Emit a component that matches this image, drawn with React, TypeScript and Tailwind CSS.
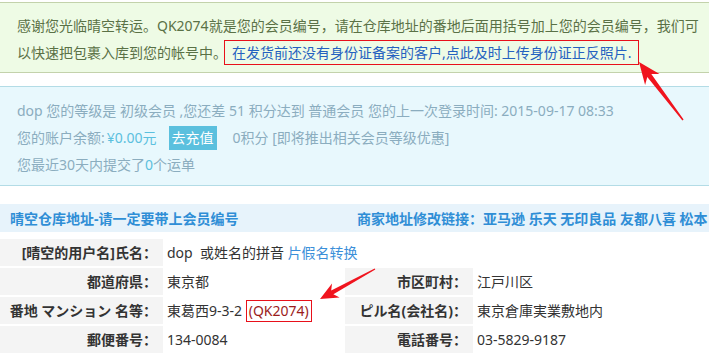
import React from "react";

const FONT = "font-['Noto_Sans','Noto_Sans_CJK_SC',sans-serif]";

function Arrows() {
  return (
    <svg
      className="pointer-events-none absolute left-0 top-0"
      width={709}
      height={362}
      viewBox="0 0 709 362"
    >
      <polygon
        fill="#f0141e"
        points="639,62 645.1,84.9 647.3,77.0 682.4,120.4 683.6,119.6 651.3,74.0 659.5,74.1"
      />
      <polygon
        fill="#f0141e"
        points="320,299 339.6,297.4 333.4,294.2 375.3,269.5 374.7,268.5 331.2,290.4 332.0,283.4"
      />
    </svg>
  );
}

type Row = { label: string; value: React.ReactNode };

function LabelCell({ children }: { children: React.ReactNode }) {
  return (
    <div className="flex h-[27px] items-center justify-end whitespace-nowrap bg-[#f4f4f4] pr-[6px] text-[14px] font-bold text-[#333]">
      {children}
    </div>
  );
}

function ValueCell({ children, span }: { children: React.ReactNode; span?: boolean }) {
  return (
    <div
      className={
        "flex h-[27px] items-center whitespace-nowrap pl-[2px] text-[14px] text-[#333]" +
        (span ? " col-span-3" : "")
      }
    >
      {children}
    </div>
  );
}

export default function App() {
  const rows: [Row, Row][] = [
    [
      { label: "都道府県：", value: "東京都" },
      { label: "市区町村：", value: "江戸川区" },
    ],
    [
      {
        label: "番地 マンション 名等：",
        value: (
          <>
            <span>東葛西9-3-2&nbsp;</span>
            <span className="flex h-[22px] items-center border border-[#e8101a] px-[2px] text-[#9b1c1c]">
              (QK2074)
            </span>
          </>
        ),
      },
      { label: "ピル名(会社名)：", value: "東京倉庫実業敷地内" },
    ],
    [
      { label: "郵便番号：", value: "134-0084" },
      { label: "電話番号：", value: "03-5829-9187" },
    ],
  ];

  return (
    <div className={`relative h-[362px] w-[709px] overflow-hidden bg-white ${FONT}`}>
      {/* success notice */}
      <div className="mt-[2px] w-[740px] border-y border-[#c3d2ab] bg-[#eefbe5] pb-[6px] pl-[17px] pt-[9px] text-[14px] leading-[27px] text-[#5a7146]">
        <div className="h-[27px] whitespace-nowrap">
          感谢您光临晴空转运。QK2074就是您的会员编号，请在仓库地址的番地后面用括号加上您的会员编号，我们可
        </div>
        <div className="flex h-[27px] items-center whitespace-nowrap">
          <span>以快速把包裹入库到您的帐号中。</span>
          <span className="ml-[-3px] flex h-[25px] items-center border border-[#e8101a] pl-[7px] pr-[6px] text-[14px] text-[#2461c0]">
            在发货前还没有身份证备案的客户,点此及时上传身份证正反照片.
          </span>
        </div>
      </div>

      {/* info notice */}
      <div className="mt-[13px] w-[740px] border-y border-[#b3dce6] bg-[#e8f8fd] pb-[7px] pl-[17px] pt-[10px] text-[14px] leading-[27px] text-[#8badbf]">
        <div className="h-[27px] whitespace-nowrap">
          dop 您的等级是 初级会员 ,您还差 51 积分达到 普通会员 您的上一次登录时间: 2015-09-17 08:33
        </div>
        <div className="flex h-[27px] items-center whitespace-nowrap">
          <span>您的账户余额:</span>
          <span className="ml-[2px] text-[#5bc0de]">¥0.00元</span>
          <span className="ml-[12px] inline-block h-[24px] w-[48px] bg-[#5bc0de] text-center leading-[24px] text-white">
            去充值
          </span>
          <span className="ml-[16px]">0积分 [即将推出相关会员等级优惠]</span>
        </div>
        <div className="h-[27px] whitespace-nowrap">
          您最近30天内提交了<span className="text-[#5bc0de]">0</span>个运单
        </div>
      </div>

      {/* warehouse header */}
      <div className="mt-[18px] flex h-[28px] items-center whitespace-nowrap bg-[#e7f3fb] pl-[10px] text-[14px] font-bold text-[#2f8ed6]">
        <span className="w-[347px] shrink-0">晴空仓库地址-请一定要带上会员编号</span>
        <span className="shrink-0">商家地址修改链接：亚马逊 乐天 无印良品 友都八喜 松本</span>
      </div>

      {/* address table */}
      <div className="mt-[7px] grid grid-cols-[163px_178px_128px_1fr] gap-[2px]">
        <LabelCell>[晴空的用户名]氏名：</LabelCell>
        <ValueCell span>
          dop&nbsp;&nbsp;或姓名的拼音&nbsp;<span className="text-[#3b8fd9]">片假名转换</span>
        </ValueCell>
        {rows.map(([a, b], i) => (
          <React.Fragment key={i}>
            <LabelCell>{a.label}</LabelCell>
            <ValueCell>{a.value}</ValueCell>
            <LabelCell>{b.label}</LabelCell>
            <ValueCell>{b.value}</ValueCell>
          </React.Fragment>
        ))}
      </div>

      <Arrows />
    </div>
  );
}
